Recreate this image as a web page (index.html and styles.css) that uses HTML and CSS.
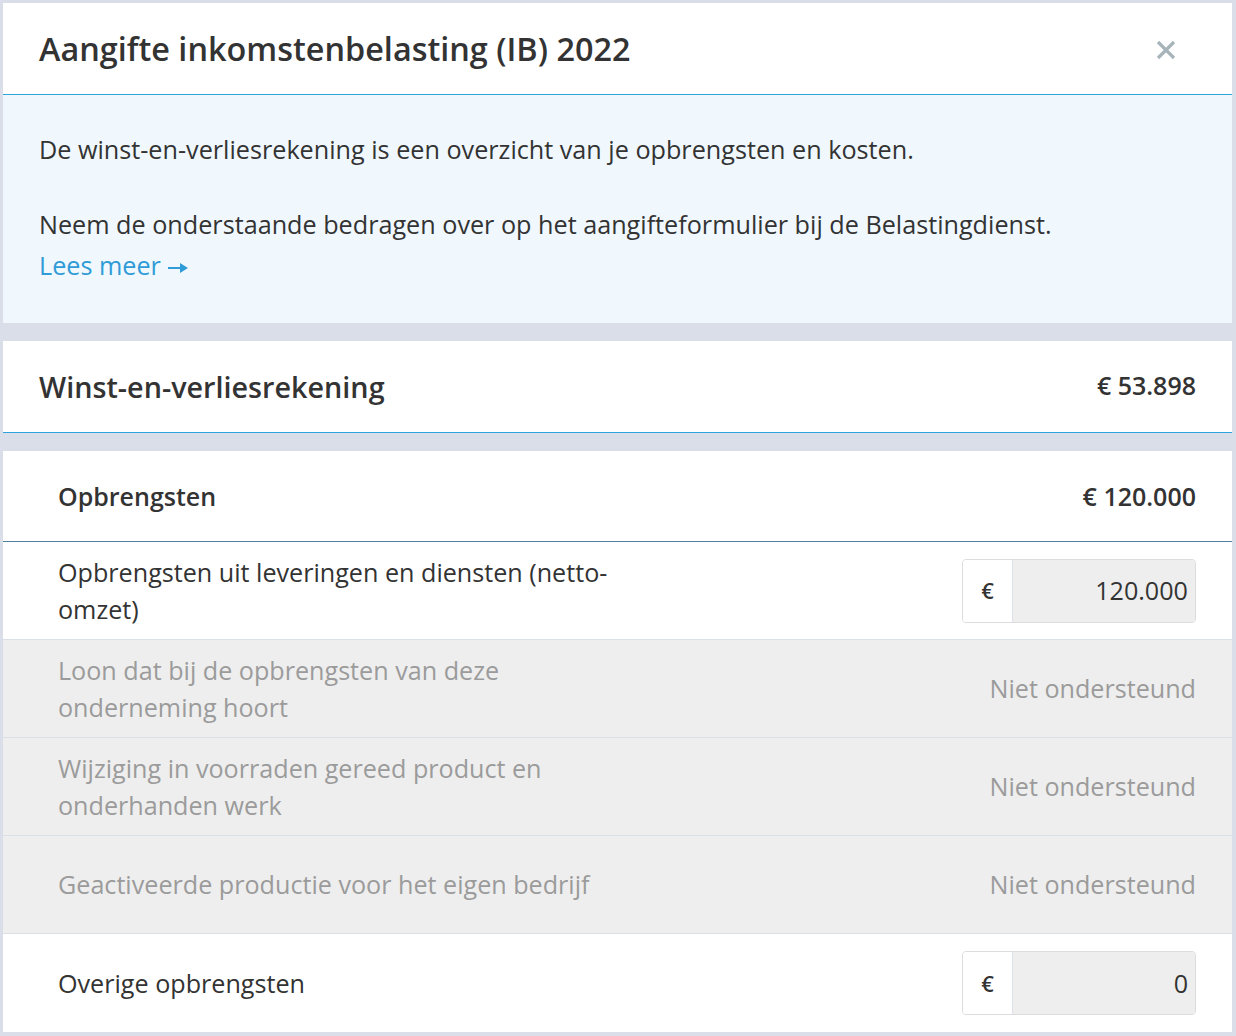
FILE: index.html
```html
<!DOCTYPE html>
<html lang="nl">
<head>
    <meta charset="UTF-8">
    <meta name="viewport" content="width=device-width, initial-scale=1.0">
    <title>Aangifte inkomstenbelasting (IB) 2022</title>
    <link rel="stylesheet" href="styles.css">
</head>
<body>
<div class="panel">

    <!-- Modal header -->
    <div class="modal-header">
        <h1>Aangifte inkomstenbelasting (IB) 2022</h1>
        <button class="close" aria-label="Sluiten">
            <svg width="20" height="20" viewBox="0 0 20 20">
                <path d="M2 2 L18 18 M18 2 L2 18" stroke="#a7b5bb" stroke-width="3.2"/>
            </svg>
        </button>
    </div>

    <!-- Uitleg -->
    <div class="info">
        <p>De winst-en-verliesrekening is een overzicht van je opbrengsten en kosten.</p>
        <p>Neem de onderstaande bedragen over op het aangifteformulier bij de Belastingdienst.<br>
            <a class="link" href="#">Lees meer<svg class="arrow" width="22" height="12" viewBox="0 0 22 12">
                <path d="M1 6 H15" stroke="currentColor" stroke-width="2"/>
                <path d="M13 1 L21 6 L13 11 Z" fill="currentColor"/>
            </svg></a></p>
    </div>

    <div class="section-head">
        <h2>Winst-en-verliesrekening</h2>
        <span class="total">&euro; 53.898</span>
    </div>

    <div class="card">
        <div class="card-head">
            <h3>Opbrengsten</h3>
            <span class="total">&euro; 120.000</span>
        </div>

        <div class="row">
            <div class="label">Opbrengsten uit leveringen en diensten (netto-omzet)</div>
            <div class="input-group">
                <span class="addon">&euro;</span>
                <span class="field">120.000</span>
            </div>
        </div>

        <div class="row disabled">
            <div class="label">Loon dat bij de opbrengsten van deze onderneming hoort</div>
            <div class="note">Niet ondersteund</div>
        </div>

        <div class="row disabled">
            <div class="label">Wijziging in voorraden gereed product en onderhanden werk</div>
            <div class="note">Niet ondersteund</div>
        </div>

        <div class="row disabled">
            <div class="label">Geactiveerde productie voor het eigen bedrijf</div>
            <div class="note">Niet ondersteund</div>
        </div>

        <div class="row">
            <div class="label">Overige opbrengsten</div>
            <div class="input-group">
                <span class="addon">&euro;</span>
                <span class="field">0</span>
            </div>
        </div>
    </div>

</div>
</body>
</html>
```

FILE: styles.css
```css
body {
    margin: 0;
    padding: 0;
    background-color: #dadee8;
    font-family: 'Open Sans', 'Liberation Sans', sans-serif;
    color: #333;
}

.panel {
    padding: 3px 4px 4px 3px;
}

h1, h2, h3 {
    margin: 0;
    font-weight: 600;
    color: #333;
}

.modal-header {
    display: flex;
    align-items: center;
    justify-content: space-between;
    height: 91px;
    padding: 0 56px 0 36px;
    background: #fff;
    border-bottom: 1px solid #2fa3dc;
}

.modal-header h1 {
    font-size: 32.4px;
    padding-bottom: 2px;
}

.close {
    display: flex;
    padding: 0;
    border: none;
    background: none;
    cursor: pointer;
    margin-top: 2px;
}

.info {
    background: #f0f8fe;
    padding: 34px 36px 37px;
    font-size: 25.2px;
    line-height: 41px;
}

.info p {
    margin: 0 0 34px;
}

.info p:last-child {
    margin-bottom: 0;
}

.link {
    color: #2f9bd7;
    text-decoration: none;
}

.arrow {
    margin-left: 6px;
    vertical-align: 1px;
}

.section-head {
    display: flex;
    align-items: center;
    justify-content: space-between;
    height: 91px;
    margin-top: 18px;
    padding: 0 36px;
    background: #fff;
    border-bottom: 1px solid #2fa3dc;
}

.section-head h2 {
    font-size: 28.75px;
}

.total {
    font-size: 25px;
    font-weight: 600;
    color: #333;
}

.section-head .total {
    margin-bottom: 3px;
}

.card {
    margin-top: 18px;
    background: #fff;
}

.card-head {
    display: flex;
    align-items: center;
    justify-content: space-between;
    height: 90px;
    padding: 0 36px 0 55px;
    border-bottom: 1px solid #4f7f9c;
}

.card-head h3 {
    font-size: 25px;
}

.row {
    display: flex;
    align-items: center;
    justify-content: space-between;
    min-height: 98px;
    box-sizing: border-box;
    padding: 0 36px 0 55px;
    border-bottom: 1px solid #d9e0e8;
    font-size: 25.15px;
    line-height: 37px;
}

.row:last-child {
    border-bottom: none;
}

.row .label {
    max-width: 570px;
}

.row.disabled {
    background: #eeeeee;
    color: #9b9b9b;
}

.input-group {
    display: flex;
    width: 234px;
    height: 64px;
    box-sizing: border-box;
    border: 1px solid #dcdcdc;
    border-radius: 4px;
    overflow: hidden;
}

.addon {
    display: flex;
    align-items: center;
    justify-content: center;
    width: 49px;
    border-right: 1px solid #dde1e8;
    background: #fff;
    font-size: 22px;
    font-weight: 600;
}

.field {
    flex: 1;
    display: flex;
    align-items: center;
    justify-content: flex-end;
    padding-right: 7px;
    background: #eeeeee;
    color: #333;
}
```
